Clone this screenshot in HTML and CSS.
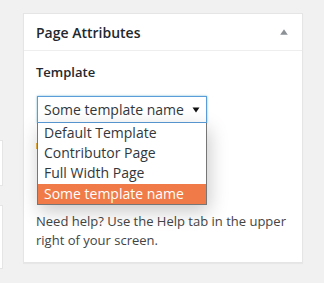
FILE: index.html
```html
<!DOCTYPE html>
<html lang="en">
<head>
  <meta charset="UTF-8">
  <meta name="viewport" content="width=device-width, initial-scale=1.0">
  <title>Page Attributes</title>
  <link rel="stylesheet" href="styles.css">
</head>
<body>
  <div class="side-boxes">
    <div class="side-box box-a"></div>
    <div class="side-box box-b"></div>
  </div>
  <div class="postbox">
    <div class="hndle">
      <h2>Page Attributes</h2>
      <svg class="toggle" width="8" height="6" viewBox="0 0 8 6" aria-hidden="true">
        <polygon points="4,0.3 7.8,5.7 0.2,5.7" fill="#8c9196"/>
      </svg>
    </div>
    <div class="inside">
      <p class="label">Template</p>
      <div class="select-wrap">
        <div class="select">
          <span>Some template name</span>
          <svg class="caret" width="8" height="6" viewBox="0 0 8 6" aria-hidden="true">
            <polygon points="0.5,0.5 7.5,0.5 4,5.5" fill="#111"/>
          </svg>
        </div>
        <span class="peek"></span>
        <ul class="options">
          <li>Default Template</li>
          <li>Contributor Page</li>
          <li>Full Width Page</li>
          <li class="selected">Some template name</li>
        </ul>
      </div>
      <p class="help">Need help? Use the Help tab in the upper right of your screen.</p>
    </div>
  </div>
</body>
</html>
```

FILE: styles.css
```css
body {
  margin: 0;
  background: #f1f1f1;
  font-family: "Open Sans", "Noto Sans", sans-serif;
  color: #23282d;
  position: relative;
  height: 283px;
  overflow: hidden;
}
.side-boxes {
  position: absolute;
  left: 0;
  top: 0;
}
.side-box {
  position: absolute;
  left: 0;
  width: 2px;
  background: #fff;
  border: 1px solid #e5e5e5;
  border-left: none;
}
.box-a {
  top: 140px;
  height: 44px;
}
.box-b {
  top: 205px;
  height: 62px;
}
.postbox {
  margin: 13px 0 0 23px;
  width: 278px;
  background: #fff;
  border: 1px solid #e5e5e5;
  box-shadow: 0 1px 1px rgba(0, 0, 0, 0.04);
}
.hndle {
  height: 36px;
  border-bottom: 1px solid #eee;
  display: flex;
  align-items: center;
  justify-content: space-between;
  padding: 0 14px 0 12px;
}
.hndle h2 {
  margin: 0;
  font-size: 14px;
  font-weight: 600;
  line-height: 20px;
  padding-top: 1px;
}
.toggle {
  display: block;
}
.inside {
  padding: 11px 12px 12px;
}
.label {
  margin: 0;
  font-size: 13px;
  font-weight: 600;
  line-height: 20px;
}
.select-wrap {
  position: relative;
  margin-top: 14px;
  margin-left: 1px;
  height: 116px;
}
.select {
  height: 25px;
  border: 1px solid #5b9dd9;
  box-shadow: 0 0 2px rgba(30, 140, 190, 0.6);
  display: flex;
  align-items: center;
  justify-content: space-between;
  padding: 0 6px;
  box-sizing: content-box;
  width: 156px;
  font-size: 14px;
  color: #32373c;
}
.caret {
  display: block;
}
.peek {
  position: absolute;
  left: -1px;
  top: 47px;
  width: 1px;
  height: 6px;
  background: #f0b849;
}
.options {
  position: absolute;
  left: 0;
  top: 27px;
  width: 168px;
  margin: 0;
  padding: 0;
  list-style: none;
  background: #fff;
  border: 1px solid #767676;
  border-top: none;
  box-shadow: 2px 6px 18px rgba(0, 0, 0, 0.22);
  font-size: 14px;
  color: #32373c;
}
.options li {
  height: 20px;
  line-height: 20px;
  padding-left: 6px;
}
.options li.selected {
  background: #f07b48;
  color: #fff;
  margin-top: 1px;
}
.help {
  margin: 0;
  font-size: 13px;
  line-height: 19px;
  color: #444;
}
```
